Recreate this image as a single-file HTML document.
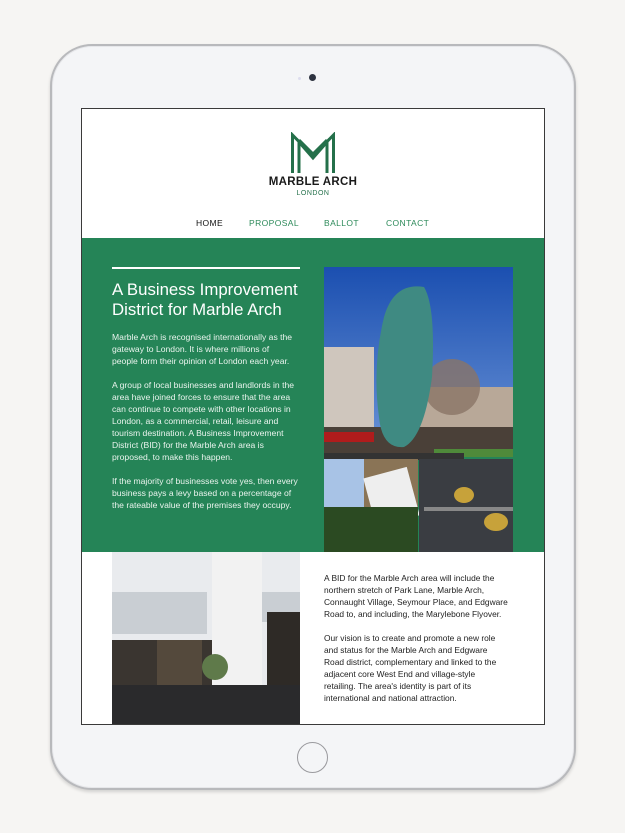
<!DOCTYPE html>
<html><head><meta charset="utf-8"><style>
*{margin:0;padding:0;box-sizing:border-box}
body{width:625px;height:833px;background:#f6f5f3;position:relative;overflow:hidden;font-family:"Liberation Sans",sans-serif}
.dev{position:absolute;left:50px;top:44px;width:526px;height:746px;border-radius:42px;background:#f4f5f7;border:2px solid #b8b9bc;box-shadow:inset 0 0 0 1px #e6e7ea,0 2px 3px rgba(0,0,0,.15)}
.cam{position:absolute;left:309px;top:74px;width:7px;height:7px;border-radius:50%;background:#2d3340}
.cam2{position:absolute;left:298px;top:77px;width:3px;height:3px;border-radius:50%;background:#dde}
.home{position:absolute;left:297px;top:742px;width:31px;height:31px;border-radius:50%;border:1.5px solid #9a9a9e;background:#f4f5f7}
.scr{position:absolute;left:81px;top:108px;width:464px;height:617px;background:#fff;border:1.5px solid #3a3a3a;overflow:hidden}
.a{position:absolute;white-space:nowrap}
.nav{font-size:8.5px;top:109px;letter-spacing:.4px}
.green{position:absolute;left:0;top:129px;width:462px;height:314px;background:#258457}
.p{font-size:8.6px;line-height:12px;color:#eaf4ee}
.q{font-size:8.4px;line-height:12px;color:#222}
</style></head><body>
<div class="dev"></div>
<div class="cam2"></div><div class="cam"></div>
<div class="home"></div>
<div class="scr">
<svg class="a" style="left:208px;top:23px" width="46" height="41" viewBox="0 0 46 41"><g fill="none" stroke="#24704a" stroke-width="3"><path d="M2.5 41V3L23 24 43.5 3V41"/><path d="M9 41V10L23 26 37 10V41"/><path d="M9 8L23 22 37 8"/></g></svg>
<div class="a" style="left:0;width:462px;text-align:center;top:67px;font-size:11.5px;font-weight:bold;color:#1a1a1a;letter-spacing:.3px">MARBLE ARCH</div>
<div class="a" style="left:0;width:462px;text-align:center;top:81px;font-size:7px;color:#24704a;letter-spacing:.5px">LONDON</div>
<div class="a nav" style="left:114px;color:#111">HOME</div>
<div class="a nav" style="left:167px;color:#2d8a5a">PROPOSAL</div>
<div class="a nav" style="left:242px;color:#2d8a5a">BALLOT</div>
<div class="a nav" style="left:304px;color:#2d8a5a">CONTACT</div>
<div class="green">
<div class="a" style="left:30px;top:29px;width:188px;height:2px;background:#fff"></div>
<div class="a" style="left:30px;top:42px;font-size:16.8px;line-height:20px;color:#fff">A Business Improvement<br>District for Marble Arch</div>
<div class="a p" style="left:30px;top:93px">Marble Arch is recognised internationally as the<br>gateway to London. It is where millions of<br>people form their opinion of London each year.</div>
<div class="a p" style="left:30px;top:141px">A group of local businesses and landlords in the<br>area have joined forces to ensure that the area<br>can continue to compete with other locations in<br>London, as a commercial, retail, leisure and<br>tourism destination. A Business Improvement<br>District (BID) for the Marble Arch area is<br>proposed, to make this happen.</div>
<div class="a p" style="left:30px;top:237px">If the majority of businesses vote yes, then every<br>business pays a levy based on a percentage of<br>the rateable value of the premises they occupy.</div>
<svg class="a" style="left:242px;top:29px" width="189" height="285" viewBox="0 0 189 285">
<defs><linearGradient id="sky" x1="0" y1="0" x2="0" y2="1"><stop offset="0" stop-color="#1b4fb0"/><stop offset="1" stop-color="#6c95d8"/></linearGradient></defs>
<rect width="189" height="190" fill="url(#sky)"/>
<rect x="0" y="80" width="50" height="95" fill="#cfc6bd"/>
<rect x="90" y="120" width="99" height="60" fill="#b8a898"/>
<circle cx="128" cy="120" r="28" fill="#8a7466" opacity=".8"/>
<rect x="0" y="160" width="189" height="30" fill="#4a4038"/>
<rect x="0" y="165" width="50" height="10" fill="#b01c1c"/>
<rect x="110" y="182" width="79" height="8" fill="#4f8a3a"/>
<path d="M60 50Q70 15 100 20Q112 40 108 110Q100 170 80 180Q58 182 55 150Q48 100 60 50Z" fill="#3f8a82"/>
<rect x="0" y="186" width="140" height="7" fill="#333"/>
<rect x="0" y="192" width="94" height="93" fill="#5d7290"/>
<rect x="0" y="192" width="40" height="60" fill="#a8c3e6"/>
<rect x="40" y="192" width="54" height="93" fill="#8a7456"/>
<rect x="45" y="205" width="45" height="50" fill="#eee" transform="rotate(-15 67 230)"/>
<rect x="0" y="240" width="94" height="45" fill="#2b4a22"/>
<rect x="95" y="192" width="94" height="93" fill="#3a3d42"/>
<ellipse cx="140" cy="228" rx="10" ry="8" fill="#c7a23a"/>
<ellipse cx="172" cy="255" rx="12" ry="9" fill="#c7a23a"/>
<rect x="100" y="240" width="89" height="4" fill="#888"/>
</svg>
</div>
<svg class="a" style="left:30px;top:443px" width="188" height="173" viewBox="0 0 188 173">
<rect width="188" height="173" fill="#e9ebee"/>
<rect x="0" y="40" width="95" height="42" fill="#c9ced3"/>
<rect x="150" y="40" width="38" height="30" fill="#c9ced3"/>
<rect x="0" y="88" width="130" height="45" fill="#3a3530"/>
<rect x="45" y="88" width="45" height="45" fill="#54493c"/>
<rect x="100" y="0" width="50" height="173" fill="#f2f2f2"/>
<rect x="155" y="60" width="33" height="75" fill="#2e2a26"/>
<circle cx="103" cy="115" r="13" fill="#5f7a4a"/>
<rect x="0" y="133" width="188" height="40" fill="#2a2a2c"/>
</svg>
<div class="a q" style="left:242px;top:463px">A BID for the Marble Arch area will include the<br>northern stretch of Park Lane, Marble Arch,<br>Connaught Village, Seymour Place, and Edgware<br>Road to, and including, the Marylebone Flyover.</div>
<div class="a q" style="left:242px;top:523px">Our vision is to create and promote a new role<br>and status for the Marble Arch and Edgware<br>Road district, complementary and linked to the<br>adjacent core West End and village-style<br>retailing. The area's identity is part of its<br>international and national attraction.</div>
</div>
</body></html>
